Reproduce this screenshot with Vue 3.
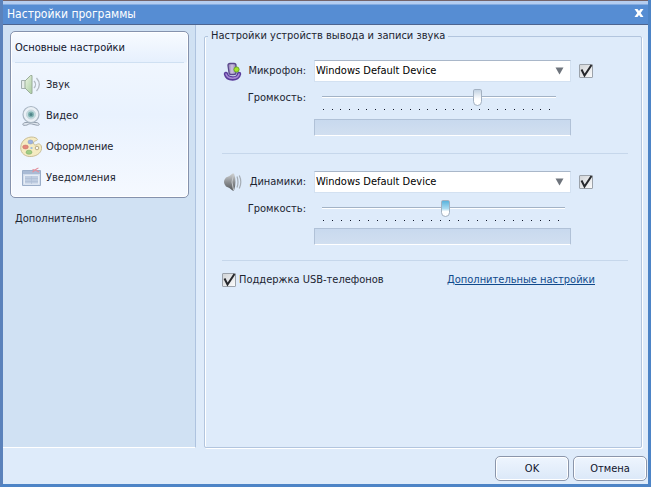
<script setup>
import { ref } from 'vue'

const navItems = [
  { id: 'sound', label: 'Звук' },
  { id: 'video', label: 'Видео' },
  { id: 'theme', label: 'Оформление' },
  { id: 'notify', label: 'Уведомления' },
]

const devices = ref([
  { id: 'mic', label: 'Микрофон:', device: 'Windows Default Device', volume: 67, enabled: true },
  { id: 'speaker', label: 'Динамики:', device: 'Windows Default Device', volume: 51, enabled: true },
])

const usbPhones = ref(true)
</script>

<template>
  <div class="window">
    <header class="titlebar">
      <h1 class="title">Настройки программы</h1>
      <button class="close" type="button" aria-label="Закрыть">
        <svg width="10" height="10" viewBox="0 0 10 10">
          <path d="M0.500 1h3L5 3l1.500-2h3L6.700 5l2.800 4h-3L5 7 3.500 9h-3L3.300 5z" fill="#fff" />
        </svg>
      </button>
    </header>

    <div class="body">
      <nav class="sidebar">
        <section class="card">
          <h2 class="card-title">Основные настройки</h2>
          <ul class="nav">
            <li v-for="item in navItems" :key="item.id">
              <a class="nav-link" href="#">
                <svg v-if="item.id === 'sound'" class="nav-icon" viewBox="0 0 22 22">
                  <defs>
                    <linearGradient id="snd" x1="0" x2="1" y1="0" y2="1">
                      <stop offset="0" stop-color="#eef5e6" />
                      <stop offset="1" stop-color="#a9cda0" />
                    </linearGradient>
                  </defs>
                  <path d="M1.500 6.500h4.500v8h-4.500z" fill="#e6ecea" stroke="#a3aeaf" />
                  <path d="M5 7L10.500 1.500h1.500v18h-1.500L5 14z" fill="url(#snd)" stroke="#9aad99" />
                  <path d="M14 7c2 2 2 5 0 7M16.500 4c3.500 4 3.500 9 0 13" fill="none" stroke="#b3bac2" stroke-width="1.300" />
                </svg>
                <svg v-else-if="item.id === 'video'" class="nav-icon" viewBox="0 0 22 22">
                  <path d="M6 17.500c-3 0-3.500 2-3 2.500s4 .5 5-.5 2.500-1 6 0 4 1 5 .5-.5-2.500-3-2.500z" fill="#e1e8f0" stroke="#939fae" />
                  <circle cx="11" cy="9.500" r="8" fill="#eaf0f6" stroke="#a9b6c3" stroke-width="1.200" />
                  <circle cx="11" cy="9.500" r="4.500" fill="#c3dce0" stroke="#c5d5dc" />
                  <circle cx="11" cy="9.500" r="3" fill="#7fb1b1" />
                  <circle cx="11" cy="9.500" r="1.500" fill="#4f8388" />
                </svg>
                <svg v-else-if="item.id === 'theme'" class="nav-icon" viewBox="0 0 22 22">
                  <path d="M16 2C10-1 1 3 .7 11.500c-.2 6 5 9.500 10.500 9 7-.5 11-5 10.300-9.500-.5-3-3-4-4.500-2.500-1.500 1-3.500.5-3.500-1.500 0-1.600 1.500-2 3-2.500s1-1.700-.5-2.500z" fill="#f5ebc2" stroke="#c9be98" />
                  <ellipse cx="10.500" cy="6" rx="2.500" ry="2" fill="#9cb2df" stroke="#8598c8" stroke-width=".6" />
                  <ellipse cx="5.500" cy="11" rx="2.800" ry="1.900" fill="#e4877b" stroke="#c97468" stroke-width=".6" />
                  <ellipse cx="9" cy="16.200" rx="3" ry="2" fill="#a0cc86" stroke="#82b06c" stroke-width=".6" />
                  <ellipse cx="11.500" cy="12" rx="1.200" ry="1" fill="#9abbe0" />
                  <circle cx="17" cy="12" r="1.800" fill="#f8f7f2" stroke="#b7ab87" />
                </svg>
                <svg v-else class="nav-icon" viewBox="0 0 22 22">
                  <path d="M2.500 3.500h18v15h-18z" fill="#d2ddec" stroke="#9baec9" />
                  <path d="M3 4h17v3H3z" fill="#a9bbd5" />
                  <path d="M4.500 8.500h14v8.500h-14z" fill="#bfcde1" stroke="#e6edf6" />
                  <path d="M11.500 9V17M5 11.500h13M5 14.500h13" stroke="#adbcd4" stroke-width=".6" />
                  <path d="M12.500 2.500c2.500 0 4 1 6.500 2.500M18.500 1C16 1.500 14.500 4 12.500 5" fill="none" stroke="#e3929f" stroke-width="1.200" />
                </svg>
                <span>{{ item.label }}</span>
              </a>
            </li>
          </ul>
        </section>
        <a class="more" href="#">Дополнительно</a>
      </nav>

      <main class="content">
        <fieldset class="group">
          <legend>Настройки устройств вывода и записи звука</legend>

          <section v-for="d in devices" :key="d.id" class="device" :class="d.id">
            <div class="caption">
              <svg v-if="d.id === 'mic'" class="device-icon" viewBox="0 0 20 20">
                <defs>
                  <linearGradient id="mic" x1="0" x2="1">
                    <stop offset="0" stop-color="#8d79b3" />
                    <stop offset=".5" stop-color="#cdc3e0" />
                    <stop offset="1" stop-color="#9583b8" />
                  </linearGradient>
                </defs>
                <path d="M4 13c1.500 6 12 6 13 0" fill="none" stroke="#5a3c9a" stroke-width="4.500" stroke-linecap="round" />
                <path d="M4 13c1.500 5.500 12 5.500 13 0" fill="none" stroke="#a78bd4" stroke-width="1.500" stroke-linecap="round" />
                <path d="M6 4.500Q6 2.500 8 2.500h4q2 0 2 2V11.500q0 2-2 2H9Q7 13.500 7 11.500z" fill="url(#mic)" stroke="#59478a" stroke-width="1.300" />
                <circle cx="14.500" cy="8.500" r="2.600" fill="#a5e426" stroke="#6aa62a" />
              </svg>
              <svg v-else class="device-icon" viewBox="0 0 20 20">
                <defs>
                  <linearGradient id="spk" x1="0" x2="0" y1="0" y2="1">
                    <stop offset="0" stop-color="#cfd1d2" />
                    <stop offset=".5" stop-color="#8d9093" />
                    <stop offset="1" stop-color="#55585b" />
                  </linearGradient>
                </defs>
                <path d="M4 5.500q3.500-1 6.500-4h1.500q3 8.500 0 17H10.500Q7.500 15.500 4 14.500q-4-4.500 0-9z" fill="url(#spk)" />
                <path d="M11.500 2q-3 8 0 16" fill="none" stroke="#c6c9cc" />
                <path d="M15 4.500q2 5.500 0 11M17.300 3.500q3 6.500 0 13" fill="none" stroke="#a6adb5" stroke-width="1.200" />
              </svg>
              <label :for="d.id + '-device'">{{ d.label }}</label>
            </div>
            <div class="combo">
              <select :id="d.id + '-device'" v-model="d.device">
                <option>Windows Default Device</option>
              </select>
              <svg class="arrow" width="9" height="8" viewBox="0 0 9 8">
                <path d="M0.500 0.500h8L4.500 7.500z" fill="#6e747c" />
              </svg>
            </div>
            <label class="check">
              <input v-model="d.enabled" type="checkbox" :aria-label="d.label" />
              <svg class="tick" viewBox="0 0 14 14"><path d="M2.500 5.500l3 6L12.500 1" /></svg>
            </label>

            <label class="caption volume-label" :for="d.id + '-volume'">Громкость:</label>
            <div class="volume">
              <input :id="d.id + '-volume'" v-model="d.volume" type="range" min="0" max="100" />
              <div class="ticks"><i v-for="n in 27" :key="n"></i></div>
            </div>

            <div class="meter"></div>
          </section>

          <div class="bottom-row">
            <label class="check">
              <input v-model="usbPhones" type="checkbox" />
              <svg class="tick" viewBox="0 0 14 14"><path d="M2.500 5.500l3 6L12.500 1" /></svg>
              <span>Поддержка USB-телефонов</span>
            </label>
            <a class="link" href="#">Дополнительные настройки</a>
          </div>
        </fieldset>
      </main>
    </div>

    <footer class="footer">
      <button class="btn" type="button">OK</button>
      <button class="btn" type="button">Отмена</button>
    </footer>
  </div>
</template>

<style>
body {
  margin: 0;
}
</style>

<style scoped>
* {
  box-sizing: border-box;
}
.window {
  display: flex;
  flex-direction: column;
  min-height: 100vh;
  border: solid #4d84c6;
  border-width: 0 3px 3px;
  border-left-color: #5b82bb;
  background: #deebfa;
  color: #1c2430;
  font: 11px/14px "DejaVu Sans Condensed", "Noto Sans", sans-serif;
}
.titlebar {
  display: flex;
  align-items: center;
  justify-content: space-between;
  height: 25px;
  padding: 3px 3px 0 4px;
  border-top: 1px solid #74646a;
  border-bottom: 1px solid #4d6590;
  background: linear-gradient(#b4cdf0 0, #b4cdf0 3px, #568dd3 4px);
}
.title {
  margin: 0;
  color: #fff;
  font-size: 12px;
  font-weight: 400;
}
.close {
  display: flex;
  padding: 0 1px 2px;
  border: 0;
  background: none;
}
.body {
  display: flex;
  flex: 1;
}
.sidebar {
  flex: 0 0 193px;
  padding: 6px 6px 0 7px;
  border-right: 1px solid #aec3df;
  border-bottom: 1px solid #fff;
  background: #d0e1f3;
}
.card {
  padding: 0 4px 4px;
  border: 1px solid #8592ad;
  border-radius: 5px;
  background: linear-gradient(#f8fbff 0, #e6f0fd 30px, #f0f6fe 31px, #e9f2fe 50%, #f5f9ff 100%);
  box-shadow: inset 0 0 0 1px #fff;
}
.card-title {
  margin: 0;
  padding: 9px 0 7px;
  border-bottom: 1px solid #cfe0f2;
  font-size: 11px;
  font-weight: 400;
  color: #10142c;
}
.nav {
  display: grid;
  gap: 9px;
  margin: 0;
  padding: 11px 5px 4px;
  list-style: none;
}
.nav-link {
  display: flex;
  align-items: center;
  gap: 4px;
  color: inherit;
  text-decoration: none;
}
.nav-icon {
  width: 22px;
  height: 22px;
}
.more {
  display: block;
  margin: 14px 5px;
  color: inherit;
  text-decoration: none;
}
.content {
  flex: 1;
  display: flex;
  min-width: 0;
  padding: 4px 6px 0 8px;
}
.group {
  flex: 1;
  min-width: 0;
  margin: 0;
  padding: 0 13px 0 17px;
  border: 1px solid #b2c5de;
  border-radius: 2px;
  box-shadow: inset 1px 0 #fff, 1px 1px #fff;
}
.group legend {
  margin-left: -14px;
  padding: 0 3px;
}
.device {
  display: grid;
  grid-template-columns: 84px 1fr 49px;
  column-gap: 8px;
  padding: 17px 0;
  border-bottom: 1px solid #c6d7eb;
}
.speaker {
  padding-bottom: 15px;
}
.caption {
  display: flex;
  align-items: center;
  justify-content: space-between;
}
.device-icon {
  width: 20px;
  height: 20px;
}
.volume-label {
  justify-content: flex-end;
  align-self: start;
  margin-top: 9px;
}
.combo {
  position: relative;
}
.combo select {
  display: block;
  width: 100%;
  height: 22px;
  padding: 0 20px 0 1px;
  border: 1px solid #d3e1f1;
  border-top-color: #a9b7c9;
  border-radius: 0;
  background: #fff;
  color: #000;
  font: inherit;
  appearance: none;
}
.arrow {
  position: absolute;
  top: 7px;
  right: 7px;
  pointer-events: none;
}
.check {
  position: relative;
  display: flex;
  align-items: center;
  gap: 3px;
}
.check input {
  width: 14px;
  height: 14px;
  margin: 0;
  border: 1px solid #9ba2aa;
  border-radius: 1px;
  background: linear-gradient(135deg, #d2d5d8, #fafafa);
  appearance: none;
}
.tick {
  position: absolute;
  left: 0;
  width: 14px;
  height: 14px;
  fill: none;
  stroke: #26282c;
  stroke-width: 2;
  pointer-events: none;
}
.check input:not(:checked) + .tick {
  display: none;
}
.volume {
  padding: 6px 15px 0 8px;
}
.speaker .volume {
  padding-right: 6px;
}
.volume input {
  display: block;
  width: 100%;
  height: 19px;
  margin: 0;
  background: linear-gradient(#a3b3c6, #a3b3c6) 0 8px / 100% 1px no-repeat, linear-gradient(#fff, #fff) 0 9px / 100% 1px no-repeat;
  appearance: none;
}
.volume input::-webkit-slider-thumb {
  width: 9px;
  height: 17px;
  border: 1px solid #a3b1c1;
  border-radius: 2px 2px 5px 5px;
  background: linear-gradient(#c3d3e3, #fff 60%);
  appearance: none;
}
.speaker input::-webkit-slider-thumb {
  background: linear-gradient(#59b3dd, #a9daf0 50%, #fff 70%);
}
.ticks {
  display: flex;
  justify-content: space-between;
  padding: 2px 6px 0 1px;
}
.ticks i {
  width: 1px;
  height: 1px;
  background: #0c1428;
  box-shadow: 0 0 1px #fff;
}
.meter {
  grid-column: 2;
  height: 17px;
  margin-top: 9px;
  border: 1px solid #b0c1d7;
  border-bottom-color: #fff;
  background: linear-gradient(#c8d9ee, #d1dff0);
}
.speaker .meter {
  margin-top: 7px;
}
.bottom-row {
  display: flex;
  align-items: center;
  justify-content: space-between;
  padding: 12px 33px 0 0;
}
.link {
  color: #104a8c;
}
.footer {
  display: flex;
  justify-content: flex-end;
  gap: 4px;
  padding: 8px 1px 3px;
}
.btn {
  width: 74px;
  height: 25px;
  padding: 0;
  border: 1px solid #8b96ab;
  border-radius: 5px;
  background: linear-gradient(#eef5fe, #dbe8f8);
  box-shadow: inset 0 0 0 1px #fff;
  color: #10142c;
  font: inherit;
}
</style>
